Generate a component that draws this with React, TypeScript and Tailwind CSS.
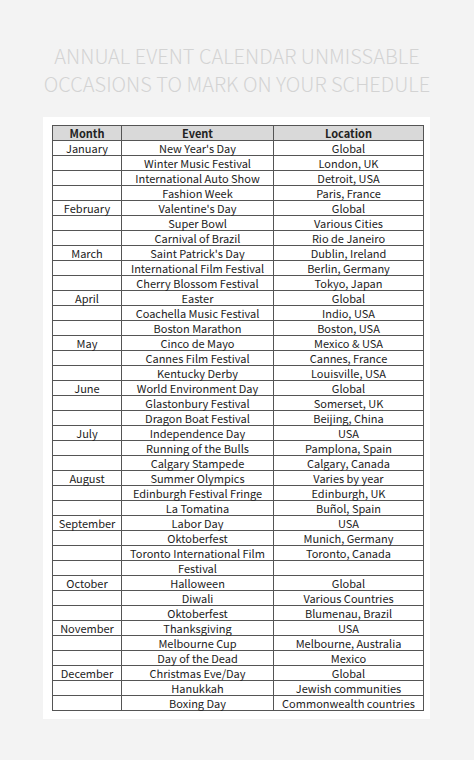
const rows: [string, string, string][] = [
  ['January', "New Year's Day", 'Global'],
  ['', 'Winter Music Festival', 'London, UK'],
  ['', 'International Auto Show', 'Detroit, USA'],
  ['', 'Fashion Week', 'Paris, France'],
  ['February', "Valentine's Day", 'Global'],
  ['', 'Super Bowl', 'Various Cities'],
  ['', 'Carnival of Brazil', 'Rio de Janeiro'],
  ['March', "Saint Patrick's Day", 'Dublin, Ireland'],
  ['', 'International Film Festival', 'Berlin, Germany'],
  ['', 'Cherry Blossom Festival', 'Tokyo, Japan'],
  ['April', 'Easter', 'Global'],
  ['', 'Coachella Music Festival', 'Indio, USA'],
  ['', 'Boston Marathon', 'Boston, USA'],
  ['May', 'Cinco de Mayo', 'Mexico & USA'],
  ['', 'Cannes Film Festival', 'Cannes, France'],
  ['', 'Kentucky Derby', 'Louisville, USA'],
  ['June', 'World Environment Day', 'Global'],
  ['', 'Glastonbury Festival', 'Somerset, UK'],
  ['', 'Dragon Boat Festival', 'Beijing, China'],
  ['July', 'Independence Day', 'USA'],
  ['', 'Running of the Bulls', 'Pamplona, Spain'],
  ['', 'Calgary Stampede', 'Calgary, Canada'],
  ['August', 'Summer Olympics', 'Varies by year'],
  ['', 'Edinburgh Festival Fringe', 'Edinburgh, UK'],
  ['', 'La Tomatina', 'Buñol, Spain'],
  ['September', 'Labor Day', 'USA'],
  ['', 'Oktoberfest', 'Munich, Germany'],
  ['', 'Toronto International Film', 'Toronto, Canada'],
  ['', 'Festival', ''],
  ['October', 'Halloween', 'Global'],
  ['', 'Diwali', 'Various Countries'],
  ['', 'Oktoberfest', 'Blumenau, Brazil'],
  ['November', 'Thanksgiving', 'USA'],
  ['', 'Melbourne Cup', 'Melbourne, Australia'],
  ['', 'Day of the Dead', 'Mexico'],
  ['December', 'Christmas Eve/Day', 'Global'],
  ['', 'Hanukkah', 'Jewish communities'],
  ['', 'Boxing Day', 'Commonwealth countries'],
];

const cell = 'border border-[#555] h-[15px] p-0 text-center leading-[13px]';

export default function App() {
  return (
    <div className="w-[474px] h-[760px] bg-[#f3f3f3] font-['Noto_Sans_CJK_SC',sans-serif] overflow-hidden">
      <h1 className="pt-[42px] text-center text-[20px] leading-[28px] font-light text-[#d3d3d3]">
        ANNUAL EVENT CALENDAR UNMISSABLE
        <br />
        OCCASIONS TO MARK ON YOUR SCHEDULE
      </h1>
      <div className="mt-[19px] ml-[43px] w-[387px] bg-white px-[9px] py-[8px]">
        <table className="w-[371px] table-fixed border-collapse text-[11px] text-[#222]">
          <colgroup>
            <col className="w-[69px]" />
            <col className="w-[152px]" />
            <col className="w-[150px]" />
          </colgroup>
          <thead>
            <tr className="bg-[#d9d9d9] font-bold">
              <th className={cell}>Month</th>
              <th className={cell}>Event</th>
              <th className={cell}>Location</th>
            </tr>
          </thead>
          <tbody>
            {rows.map((r, i) => (
              <tr key={i}>
                <td className={cell}>{r[0]}</td>
                <td className={cell + ' whitespace-nowrap'}>{r[1]}</td>
                <td className={cell + ' whitespace-nowrap'}>{r[2]}</td>
              </tr>
            ))}
          </tbody>
        </table>
      </div>
    </div>
  );
}
